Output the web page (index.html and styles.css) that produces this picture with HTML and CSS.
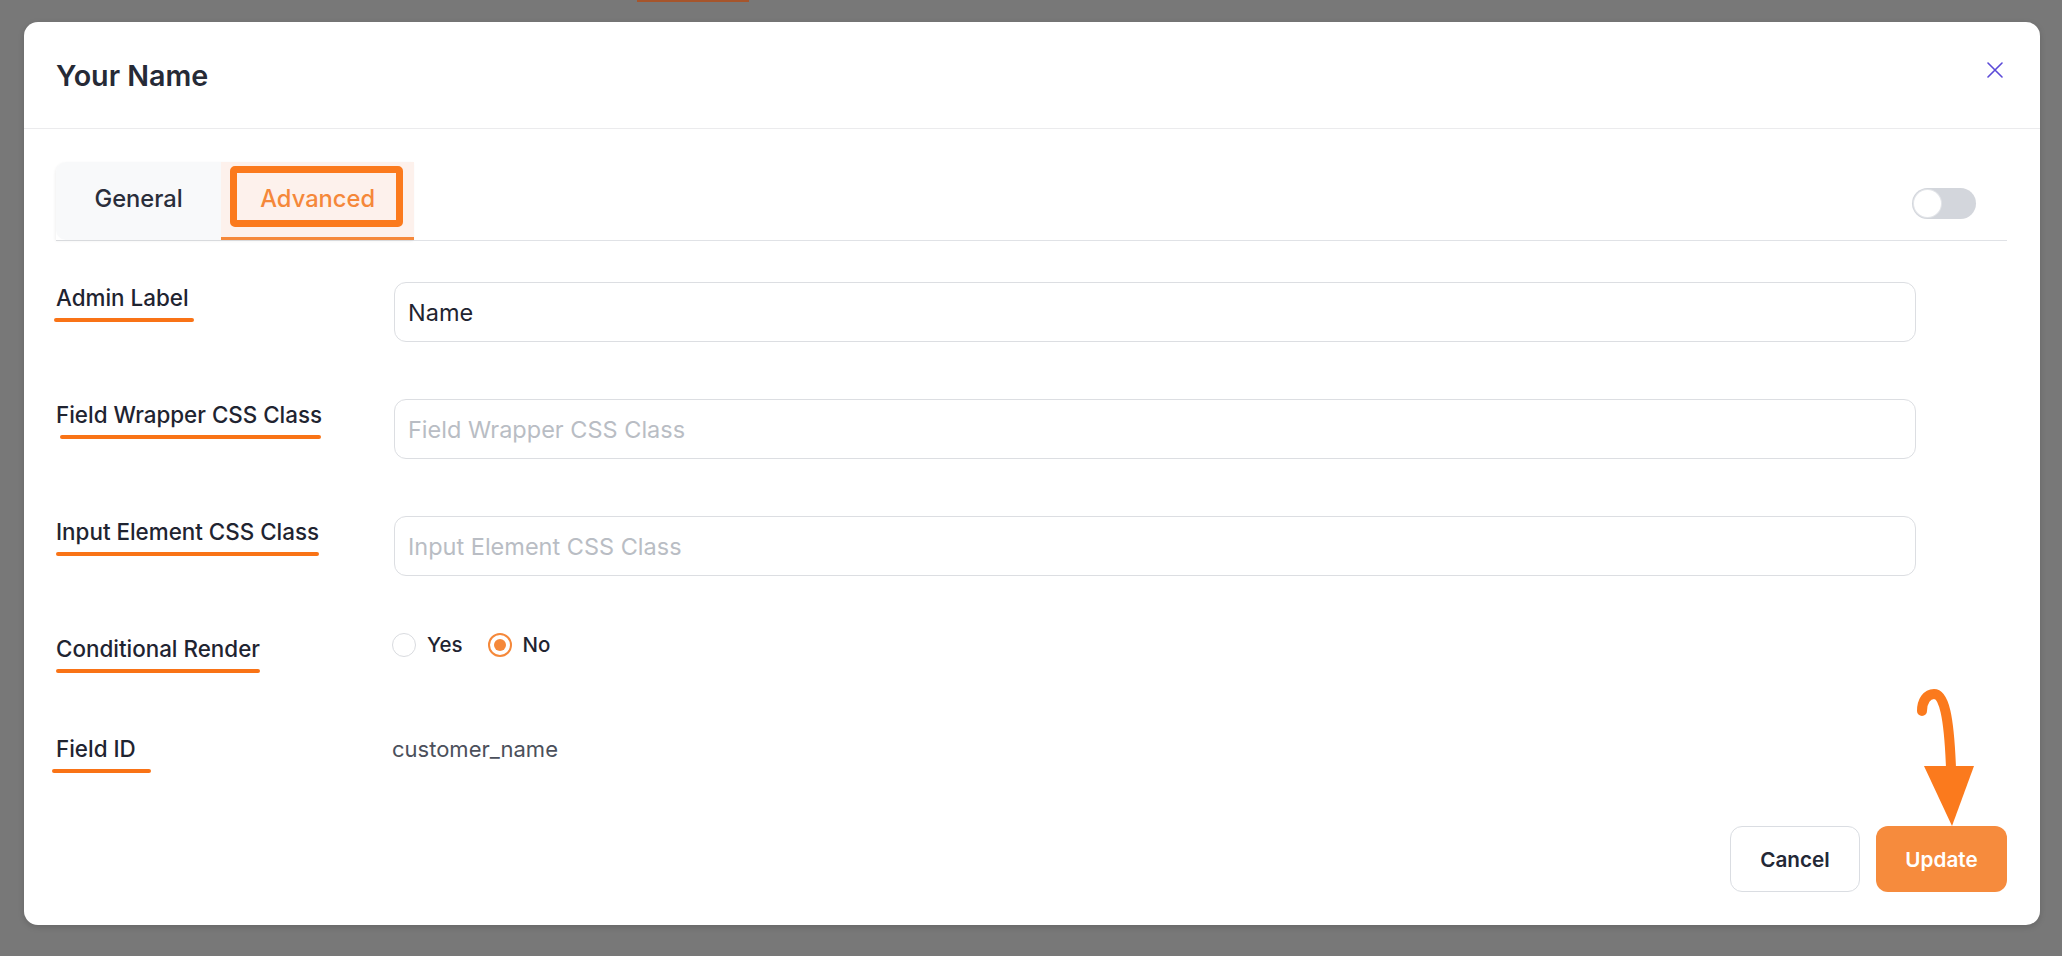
FILE: index.html
```html
<!DOCTYPE html>
<html lang="en">
<head>
<meta charset="utf-8">
<title>Your Name</title>
<link rel="stylesheet" href="styles.css">
</head>
<body>
<div class="backdrop-strip"></div>
<div class="modal">
  <header class="modal-header">
    <h2 class="modal-title">Your Name</h2>
    <button class="close-btn" aria-label="Close">
      <svg width="16" height="16" viewBox="0 0 16 16"><path d="M1 1 L15 15 M15 1 L1 15" stroke="#5b4ad8" stroke-width="1.6" fill="none" stroke-linecap="round"/></svg>
    </button>
  </header>

  <div class="modal-body">
    <div class="tabbar">
      <div class="tabs">
        <button class="tab">General</button>
        <button class="tab tab-active">Advanced<span class="mark-box"></span></button>
      </div>
      <span class="switch"><span class="knob"></span></span>
    </div>

    <div class="form">
      <div class="row">
        <div class="label-cell"><label class="lbl lbl-admin">Admin Label</label></div>
        <div class="field-cell"><input class="text-input" type="text" value="Name"></div>
      </div>
      <div class="row">
        <div class="label-cell"><label class="lbl lbl-wrapper">Field Wrapper CSS Class</label></div>
        <div class="field-cell"><input class="text-input" type="text" placeholder="Field Wrapper CSS Class"></div>
      </div>
      <div class="row">
        <div class="label-cell"><label class="lbl">Input Element CSS Class</label></div>
        <div class="field-cell"><input class="text-input" type="text" placeholder="Input Element CSS Class"></div>
      </div>
      <div class="row">
        <div class="label-cell"><label class="lbl">Conditional Render</label></div>
        <div class="field-cell radios">
          <label class="radio"><input type="radio" name="cr"><span>Yes</span></label>
          <label class="radio"><input type="radio" name="cr" checked><span>No</span></label>
        </div>
      </div>
      <div class="row">
        <div class="label-cell"><label class="lbl lbl-id">Field ID</label></div>
        <div class="field-cell"><span class="field-value">customer_name</span></div>
      </div>
    </div>
  </div>

  <footer class="modal-footer">
    <button class="btn btn-cancel">Cancel</button>
    <div class="update-wrap">
      <svg class="arrow" width="70" height="144" viewBox="0 0 70 144">
        <path d="M12 27 C 12 17, 17 10, 24 10 C 34 10, 39 32, 41 84" stroke="#fb7a1d" stroke-width="10" fill="none" stroke-linecap="round"/>
        <polygon points="14,82 64,82 42,142" fill="#fb7a1d"/>
      </svg>
      <button class="btn btn-update">Update</button>
    </div>
  </footer>
</div>
</body>
</html>
```

FILE: styles.css
```css
* { box-sizing: border-box; }

html, body {
  margin: 0;
  height: 100%;
}

body {
  background: #787878;
  font-family: Inter, "Noto Sans", "Liberation Sans", sans-serif;
  color: #1f2431;
  padding: 0 22px 0 24px;
  overflow: hidden;
}

.backdrop-strip {
  width: 112px;
  height: 2px;
  margin-left: 613px;
  background: #a6552c;
}

.modal {
  margin-top: 20px;
  width: 2016px;
  height: 903px;
  background: #ffffff;
  border-radius: 14px;
  display: flex;
  flex-direction: column;
  box-shadow: 0 2px 6px rgba(0,0,0,0.15);
}

/* header */
.modal-header {
  height: 107px;
  border-bottom: 1px solid #ebebed;
  display: flex;
  align-items: center;
  justify-content: space-between;
  padding: 0 37px 0 32px;
}

.modal-title {
  margin: 0;
  font-size: 28.7px;
  font-weight: 600;
  color: #262a36;
}

.close-btn {
  align-self: flex-start;
  margin-top: 40px;
  width: 16px;
  height: 16px;
  padding: 0;
  border: 0;
  background: none;
  display: flex;
}

/* body */
.modal-body {
  padding: 33px 33px 0 32px;
}

.tabbar {
  display: flex;
  align-items: center;
  justify-content: space-between;
  border-bottom: 1px solid #e0e2e6;
}

.tabs {
  display: flex;
  border-radius: 10px 0 0 0;
  box-shadow: -1px 1px 3px rgba(0,0,0,0.06);
}

.tab {
  height: 78px;
  padding: 0 38.5px 5px;
  border: 0;
  background: #f8f9fa;
  font-family: inherit;
  font-size: 23.7px;
  font-weight: 500;
  color: #2a2e3a;
}

.tab:first-child {
  border-radius: 10px 0 0 10px;
}

.tab-active {
  position: relative;
  background: #fdf1ec;
  color: #f5883a;
  padding: 0 39px 5px;
  box-shadow: inset 0 -3px 0 #f5883a;
}

.mark-box {
  position: absolute;
  left: 9px;
  top: 4px;
  right: 11px;
  bottom: 13px;
  border: 7px solid #fb7a1d;
  border-radius: 5px;
}

.switch {
  width: 64px;
  height: 31px;
  border-radius: 16px;
  background: #d3d6dc;
  margin-right: 31px;
  margin-top: 4px;
  padding: 2px;
  display: flex;
}

.knob {
  width: 27px;
  height: 27px;
  border-radius: 50%;
  background: #ffffff;
  box-shadow: 0 0 0 1px #e3e5e9;
}

/* form */
.form {
  margin-top: 41px;
  display: flex;
  flex-direction: column;
  gap: 57px;
}

.row {
  display: grid;
  grid-template-columns: 338px 1522px;
  align-items: start;
}

.label-cell {
  min-height: 43px;
}

.lbl {
  display: inline-block;
  font-size: 22.4px;
  line-height: 32px;
  font-weight: 500;
  color: #1f2431;
}

.lbl::after {
  content: "";
  display: block;
  height: 4px;
  margin-top: 4px;
  width: 100%;
  border-radius: 2px;
  background: #f97316;
}

.lbl-admin::after {
  margin-left: -2px;
  width: calc(100% + 7px);
}

.lbl-wrapper::after {
  margin-left: 4px;
  width: calc(100% - 5px);
}

.lbl-id::after {
  margin-left: -4px;
  width: calc(100% + 19px);
}

.text-input {
  width: 100%;
  height: 60px;
  border: 1px solid #dcdee2;
  border-radius: 12px;
  padding: 0 13px;
  font-family: inherit;
  font-size: 23.5px;
  color: #1f2431;
  background: #fff;
  outline: none;
}

.text-input::placeholder {
  color: #b9bdc4;
}

.radios {
  display: flex;
  align-items: center;
  height: 24px;
  gap: 25px;
  margin-left: -2px;
}

.radio {
  display: flex;
  align-items: center;
  gap: 11px;
  font-size: 20.5px;
  font-weight: 500;
  line-height: 24px;
  color: #1f2431;
}

.radio input {
  appearance: none;
  -webkit-appearance: none;
  margin: 0;
  width: 24px;
  height: 24px;
  border-radius: 50%;
  border: 1px solid #d9dbdf;
  background: #fff;
  display: grid;
  place-items: center;
}

.radio input:checked {
  border: 2px solid #f5883a;
}

.radio input:checked::before {
  content: "";
  width: 12px;
  height: 12px;
  border-radius: 50%;
  background: #f5883a;
}

.field-value {
  display: block;
  margin-left: -2px;
  font-size: 22px;
  line-height: 32px;
  color: #4b505b;
}

/* footer */
.modal-footer {
  margin-top: 50px;
  padding: 0 33px 33px 0;
  display: flex;
  justify-content: flex-end;
  gap: 16px;
}

.btn {
  height: 66px;
  border-radius: 12px;
  font-family: inherit;
  font-size: 20.7px;
  font-weight: 600;
}

.btn-cancel {
  width: 130px;
  background: #fff;
  border: 1px solid #dadde2;
  color: #232836;
}

.update-wrap {
  position: relative;
}

.btn-update {
  width: 131px;
  border: 0;
  background: #f68b3d;
  color: #ffffff;
}

.arrow {
  position: absolute;
  left: 34px;
  top: -142px;
}
```
